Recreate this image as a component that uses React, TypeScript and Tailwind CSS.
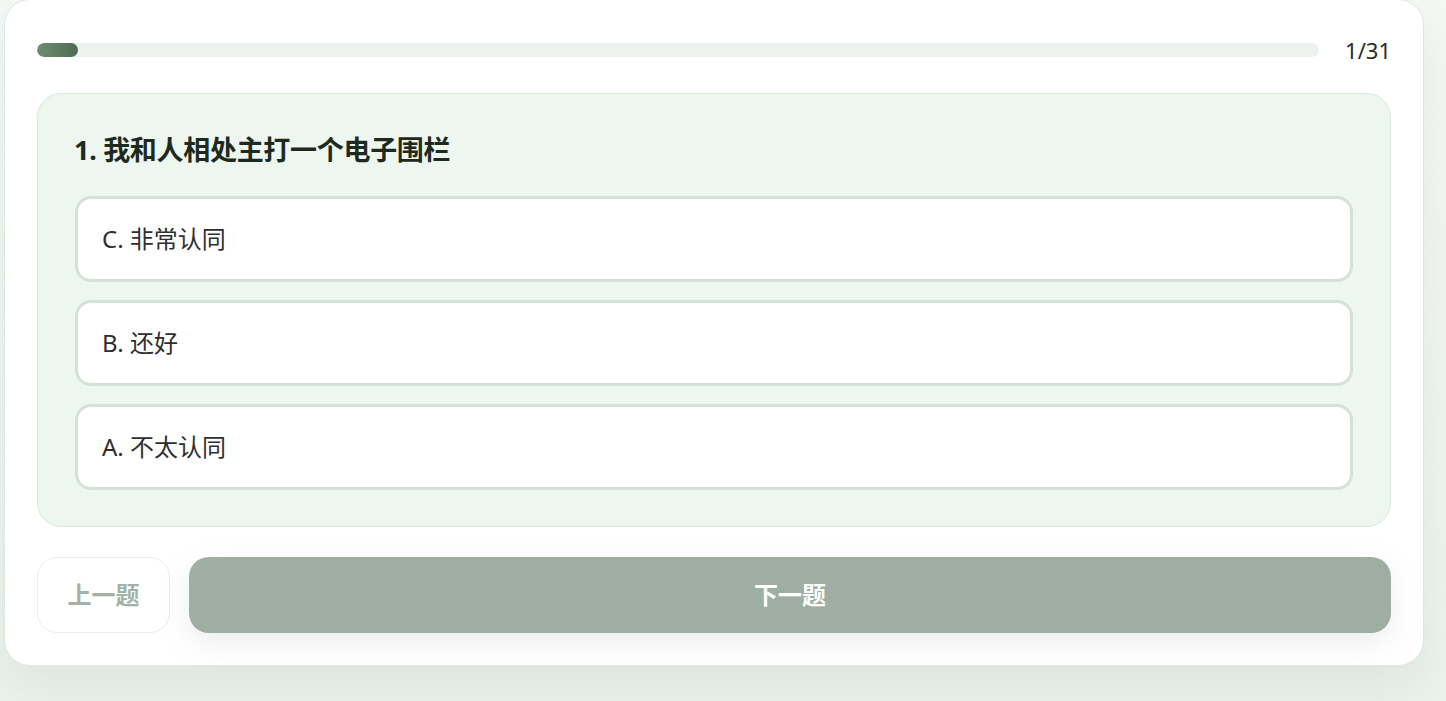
import React from "react";

const font = { fontFamily: '"Noto Sans", "Noto Sans CJK SC", sans-serif' };

export default function App() {
  const options = ["C. 非常认同", "B. 还好", "A. 不太认同"];
  return (
    <div
      className="w-[1446px] h-[701px] overflow-hidden bg-gradient-to-b from-[#f5f8f5] to-[#ecf2ed]"
      style={font}
    >
      <div className="ml-[4px] w-[1420px] h-[667px] -mt-px rounded-[26px] border border-[#dde8df] bg-white shadow-[0_20px_50px_rgba(90,120,95,0.10)] px-[32px] pt-[33px]">
        <div className="flex items-center h-[34px]">
          <div className="flex-1 h-[14px] rounded-full bg-[#edf2ee] overflow-hidden">
            <div className="h-full w-[41px] rounded-full bg-gradient-to-r from-[#6e8d71] to-[#4d6d53]" />
          </div>
          <div className="ml-[26px] text-[22px] text-[#2b2b2b] leading-none">1/31</div>
        </div>
        <div className="mt-[26px] rounded-[24px] border border-[#dce8de] bg-[#edf6ef] px-[37px] pt-[33px] pb-[36px]">
          <div className="-ml-px text-[27px] tracking-[-0.3px] font-bold text-[#1e2a20] leading-[46px]">
            1. 我和人相处主打一个电子围栏
          </div>
          <div className="mt-[23px] flex flex-col gap-[18px]">
            {options.map((o) => (
              <div
                key={o}
                className="h-[86px] rounded-[16px] border-[3px] border-[#d3e1d6] bg-white flex items-center pl-[24px] text-[24px] text-[#2f2f2f]"
              >
                {o}
              </div>
            ))}
          </div>
        </div>
        <div className="mt-[30px] flex gap-[19px]">
          <div className="w-[133px] h-[76px] rounded-[20px] border border-[#e8efe9] bg-white flex items-center justify-center text-[24px] font-bold text-[#a2b2a6]">
            上一题
          </div>
          <div className="flex-1 h-[76px] rounded-[20px] bg-[#9eaea3] flex items-center justify-center text-[24px] font-bold text-white shadow-[0_10px_30px_rgba(120,140,125,0.15)]">
            下一题
          </div>
        </div>
      </div>
    </div>
  );
}
